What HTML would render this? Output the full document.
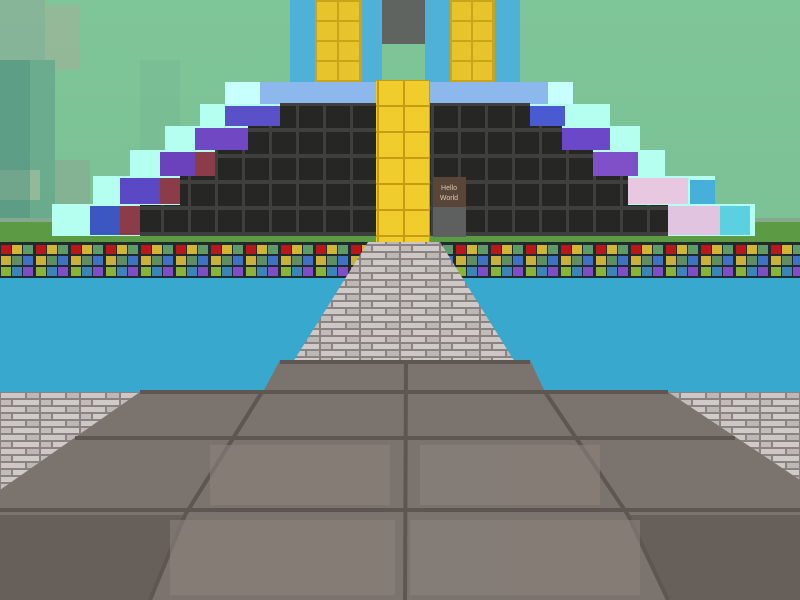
<!DOCTYPE html>
<html><head><meta charset="utf-8"><style>html,body{margin:0;padding:0;background:#7cc196;overflow:hidden}svg{display:block}</style></head><body>
<svg width="800" height="600" viewBox="0 0 800 600" xmlns="http://www.w3.org/2000/svg">
<defs>
<linearGradient id="sky" x1="0" y1="0" x2="0" y2="1"><stop offset="0" stop-color="#7ec597"/><stop offset="1" stop-color="#76bb92"/></linearGradient>
<pattern id="blk" x="0" y="0" width="27" height="26" patternUnits="userSpaceOnUse"><rect width="27" height="26" fill="#3f3f3d"/><rect x="2" y="2" width="24" height="22" fill="#262625"/></pattern>
<pattern id="gold" x="378" y="80" width="26" height="26" patternUnits="userSpaceOnUse"><rect width="26" height="26" fill="#c89c12"/><rect x="1" y="1" width="24" height="24" fill="#f0cc2c"/></pattern>
<pattern id="strip" x="0" y="243" width="35" height="34" patternUnits="userSpaceOnUse"><rect width="35" height="34" fill="#1f2a2e"/>
<rect x="1" y="2" width="10" height="9" fill="#b81818"/><rect x="12" y="2" width="10" height="9" fill="#d2b532"/><rect x="23" y="2" width="10" height="9" fill="#5f9a6a"/>
<rect x="1" y="13" width="10" height="9" fill="#c9b13a"/><rect x="12" y="13" width="10" height="9" fill="#5f8e60"/><rect x="23" y="13" width="10" height="9" fill="#3f71c4"/>
<rect x="1" y="24" width="10" height="9" fill="#8ab33a"/><rect x="12" y="24" width="10" height="9" fill="#3a84b8"/><rect x="23" y="24" width="10" height="9" fill="#7f4ec6"/></pattern>
<pattern id="brick" x="0" y="0" width="40" height="14" patternUnits="userSpaceOnUse"><rect width="40" height="14" fill="#8a8381"/><rect x="1" y="1" width="24" height="5" fill="#cdc7c5"/><rect x="27" y="1" width="12" height="5" fill="#bdb7b5"/><rect x="1" y="8" width="10" height="5" fill="#c2bcba"/><rect x="13" y="8" width="26" height="5" fill="#d0cac8"/></pattern>
</defs>
<rect width="800" height="600" fill="url(#sky)"/>
<g opacity="0.55">
<rect x="0" y="0" width="45" height="60" fill="#8ea89a"/>
<rect x="45" y="5" width="35" height="65" fill="#a6b09a"/>
<rect x="0" y="60" width="55" height="170" fill="#5e9a88"/>
<rect x="0" y="170" width="40" height="30" fill="#a5b59a"/>
<rect x="55" y="160" width="35" height="45" fill="#8aa892"/>
<rect x="140" y="60" width="40" height="100" fill="#72b290" opacity="0.6"/>
</g>
<rect x="0" y="60" width="30" height="170" fill="#4f8f80" opacity="0.5"/>
<rect x="0" y="218" width="800" height="26" fill="#5d9a44"/>
<rect x="0" y="218" width="800" height="4" fill="#86a88e"/>
<rect x="290" y="0" width="92" height="82" fill="#4fb0d8"/>
<rect x="425" y="0" width="95" height="82" fill="#4fb0d8"/>
<rect x="315" y="0" width="47" height="82" fill="#c9a51c"/>
<rect x="317" y="2" width="20" height="18" fill="#e8c42c"/><rect x="339" y="2" width="20" height="18" fill="#e8c42c"/>
<rect x="317" y="22" width="20" height="18" fill="#e8c42c"/><rect x="339" y="22" width="20" height="18" fill="#e8c42c"/>
<rect x="317" y="42" width="20" height="18" fill="#e8c42c"/><rect x="339" y="42" width="20" height="18" fill="#e8c42c"/>
<rect x="317" y="62" width="20" height="18" fill="#e8c42c"/><rect x="339" y="62" width="20" height="18" fill="#e8c42c"/>
<rect x="450" y="0" width="45" height="82" fill="#c9a51c"/>
<rect x="452" y="2" width="19" height="18" fill="#e8c42c"/><rect x="473" y="2" width="19" height="18" fill="#e8c42c"/>
<rect x="452" y="22" width="19" height="18" fill="#e8c42c"/><rect x="473" y="22" width="19" height="18" fill="#e8c42c"/>
<rect x="452" y="42" width="19" height="18" fill="#e8c42c"/><rect x="473" y="42" width="19" height="18" fill="#e8c42c"/>
<rect x="452" y="62" width="19" height="18" fill="#e8c42c"/><rect x="473" y="62" width="19" height="18" fill="#e8c42c"/>
<rect x="382" y="0" width="43" height="44" fill="#5f6461"/>
<rect x="240" y="82" width="310" height="22" fill="#8cb8ee"/>
<rect x="225" y="82" width="35" height="22" fill="#c8ffff"/><rect x="548" y="82" width="25" height="22" fill="#c8ffff"/>
<g fill="#b4fff0">
<rect x="200" y="104" width="80" height="24"/><rect x="530" y="104" width="80" height="24"/>
<rect x="165" y="126" width="85" height="26"/><rect x="560" y="126" width="80" height="26"/>
<rect x="130" y="150" width="90" height="28"/><rect x="590" y="150" width="75" height="28"/>
<rect x="93" y="176" width="90" height="30"/><rect x="625" y="176" width="90" height="30"/>
<rect x="52" y="204" width="90" height="32"/><rect x="665" y="204" width="90" height="32"/>
</g>
<rect x="225" y="106" width="55" height="20" fill="#5a50c8"/><rect x="530" y="106" width="35" height="20" fill="#4a5ad0"/>
<rect x="195" y="128" width="55" height="22" fill="#7048c4"/><rect x="560" y="128" width="50" height="22" fill="#6a48c8"/>
<rect x="160" y="152" width="55" height="24" fill="#6b42bc"/><rect x="593" y="152" width="45" height="24" fill="#8050c8"/>
<rect x="120" y="178" width="60" height="26" fill="#5a48c4"/><rect x="628" y="178" width="60" height="26" fill="#e8c8e0"/>
<rect x="90" y="206" width="50" height="29" fill="#3c58c0"/><rect x="668" y="206" width="55" height="29" fill="#e0c4e0"/>
<rect x="120" y="206" width="22" height="29" fill="#8a3c48"/><rect x="160" y="178" width="20" height="26" fill="#8a3c48"/><rect x="195" y="152" width="20" height="24" fill="#8a3c48"/>
<rect x="690" y="180" width="25" height="24" fill="#46b0d8"/><rect x="720" y="206" width="30" height="29" fill="#5ad0e0"/>
<rect x="280" y="103" width="100" height="23" fill="url(#blk)"/><rect x="430" y="103" width="100" height="23" fill="url(#blk)"/>
<rect x="248" y="126" width="132" height="24" fill="url(#blk)"/><rect x="430" y="126" width="132" height="24" fill="url(#blk)"/>
<rect x="215" y="150" width="165" height="26" fill="url(#blk)"/><rect x="430" y="150" width="163" height="26" fill="url(#blk)"/>
<rect x="180" y="176" width="200" height="29" fill="url(#blk)"/><rect x="430" y="176" width="198" height="29" fill="url(#blk)"/>
<rect x="140" y="205" width="240" height="31" fill="url(#blk)"/><rect x="430" y="205" width="238" height="31" fill="url(#blk)"/>
<rect x="433" y="177" width="33" height="30" fill="#5a4638"/>
<text x="449" y="190" font-family="Liberation Sans, sans-serif" font-size="7" fill="#d8c8b0" text-anchor="middle">Hello</text>
<text x="449" y="200" font-family="Liberation Sans, sans-serif" font-size="7" fill="#d8c8b0" text-anchor="middle">World</text>
<rect x="433" y="207" width="33" height="30" fill="#5e6060"/>
<rect x="376" y="80" width="54" height="162" fill="url(#gold)"/>
<rect x="0" y="242" width="800" height="36" fill="url(#strip)"/>
<rect x="0" y="278" width="800" height="114" fill="#38a8cf"/>
<polygon points="368,242 440,242 515,362 293,362" fill="url(#brick)"/>
<polygon points="0,392 140,392 0,490" fill="url(#brick)"/>
<polygon points="668,392 800,392 800,480" fill="url(#brick)"/>
<polygon points="280,360 530,360 545,392 668,392 800,480 800,600 0,600 0,490 140,392 263,392" fill="#7b736d"/>
<polygon points="0,515 185,515 150,600 0,600" fill="#675f5a"/>
<polygon points="628,515 800,515 800,600 668,600" fill="#675f5a"/>
<g stroke="#5e5651" stroke-width="4" fill="none">
<line x1="280" y1="362" x2="530" y2="362"/>
<line x1="140" y1="392" x2="668" y2="392"/>
<line x1="75" y1="438" x2="735" y2="438"/>
<line x1="0" y1="510" x2="800" y2="510"/>
<line x1="406" y1="362" x2="405" y2="600"/>
<line x1="262" y1="392" x2="185" y2="515"/>
<line x1="545" y1="392" x2="628" y2="515"/>
<line x1="185" y1="515" x2="150" y2="600"/>
<line x1="628" y1="515" x2="668" y2="600"/>
</g>
<g fill="#8a827c" opacity="0.6">
<rect x="420" y="445" width="180" height="60"/><rect x="210" y="445" width="180" height="60"/>
<rect x="410" y="520" width="230" height="75"/><rect x="170" y="520" width="225" height="75"/>
</g>
</svg>
</body></html>
